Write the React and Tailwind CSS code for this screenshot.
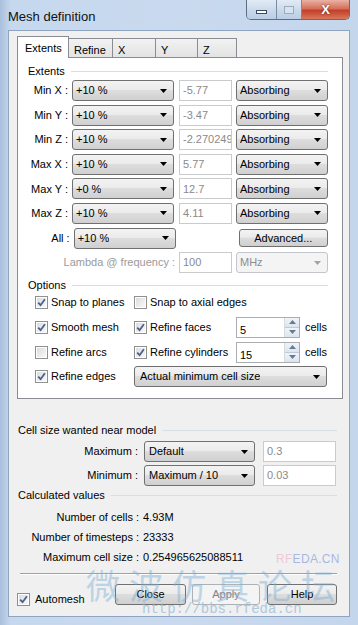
import React from 'react';

const Arrow = ({ disabled }) => (
  <svg width="7" height="4" viewBox="0 0 7 4" className="shrink-0">
    <path d="M0 0h7L3.5 4z" fill={disabled ? '#a3a3a3' : '#000'} />
  </svg>
);

const Combo = ({ text, className = '', disabled }) => (
  <div
    className={`h-[21px] shrink-0 flex items-center justify-between pl-[3px] pr-[6px] rounded-[3px] border ${
      disabled
        ? 'border-[#c3c6ca] bg-[#f4f4f4] text-[#8d8d8d]'
        : 'border-[#707070] bg-[linear-gradient(#f3f3f3,#ebebeb_45%,#dddddd_50%,#d0d0d0)]'
    } ${className}`}
  >
    <span className="whitespace-nowrap overflow-hidden">{text}</span>
    <Arrow disabled={disabled} />
  </div>
);

const Field = ({ text, className = '', dark }) => (
  <div
    className={`h-[21px] shrink-0 flex items-center pl-[3px] border bg-white overflow-hidden whitespace-nowrap ${
      dark ? 'border-[#abadb3] text-black' : 'border-[#c9cbcf] text-[#8a8a8a]'
    } ${className}`}
  >
    {text}
  </div>
);

const Check = ({ checked }) => (
  <div className="w-[13px] h-[13px] shrink-0 border border-[#8e8f8f] bg-white p-[1px]">
    <div className="w-full h-full bg-[linear-gradient(135deg,#dcdcdc,#f8f8f8)] flex items-center justify-center">
      {checked && (
        <svg width="9" height="9" viewBox="0 0 9 9">
          <path d="M1.2 4.6L3.6 7.2L7.9 1.2" fill="none" stroke="#4a5f8f" strokeWidth="1.8" />
        </svg>
      )}
    </div>
  </div>
);

const CheckLabel = ({ checked, label, className = '' }) => (
  <div className={`flex items-center gap-[3px] whitespace-nowrap ${className}`}>
    <Check checked={checked} />
    <span>{label}</span>
  </div>
);

const Group = ({ title, className = '' }) => (
  <div className={`h-[14px] flex items-center gap-[6px] ${className}`}>
    <span className="whitespace-nowrap">{title}</span>
    <div className="flex-1 h-px bg-[#d5dfe5]" />
  </div>
);

const Spin = ({ value }) => (
  <div className="h-[21px] w-[64px] shrink-0 flex border border-[#abadb3] bg-white">
    <span className="flex-1 pl-[3px] pt-[4px]">{value}</span>
    <div className="w-[15px] flex flex-col border-l border-[#d6dbe0]">
      <div className="flex-1 flex items-center justify-center bg-[linear-gradient(#f0f4f9,#dbe5f0)] border-b border-[#c0cad6]">
        <svg width="7" height="4" viewBox="0 0 7 4"><path d="M0 4h7L3.5 0z" fill="#6a7a90" /></svg>
      </div>
      <div className="flex-1 flex items-center justify-center bg-[linear-gradient(#f0f4f9,#dbe5f0)]">
        <svg width="7" height="4" viewBox="0 0 7 4"><path d="M0 0h7L3.5 4z" fill="#6a7a90" /></svg>
      </div>
    </div>
  </div>
);

const Button = ({ text, className = '', disabled }) => (
  <div
    className={`h-[21px] flex items-center justify-center rounded-[3px] border ${
      disabled
        ? 'border-[#adb2b5] bg-[#f4f4f4] text-[#838383]'
        : 'border-[#707070] bg-[linear-gradient(#f3f3f3,#ebebeb_45%,#dddddd_50%,#cfcfcf)]'
    } ${className}`}
  >
    {text}
  </div>
);

const extents = [
  ['Min X :', '+10 %', '-5.77'],
  ['Min Y :', '+10 %', '-3.47'],
  ['Min Z :', '+10 %', '-2.270249'],
  ['Max X :', '+10 %', '5.77'],
  ['Max Y :', '+0 %', '12.7'],
  ['Max Z :', '+10 %', '4.11'],
];

const tabs = [
  ['Refine', 'w-[44px]'],
  ['X', 'w-[43px]'],
  ['Y', 'w-[42px]'],
  ['Z', 'w-[39px]'],
];

export default function App() {
  return (
    <div className="w-[358px] h-[625px] relative overflow-hidden bg-[linear-gradient(90deg,#a9bfdc,#c6d8ee_3%,#c9daef_50%,#c4d6ec)] font-['Liberation_Sans',Arial,sans-serif] text-[11px] text-black">
      {/* title bar */}
      <div className="h-[30px] flex justify-between items-start">
        <div className="pl-[8px] pt-[7px] text-[13px] text-[#111]">Mesh definition</div>
        <div className="mr-[8px] flex h-[20px] rounded-b-[5px] overflow-hidden border border-t-0 border-[#5d6d85]">
          <div className="w-[30px] flex items-center justify-center bg-[linear-gradient(#e2ebf6,#cbdaec_50%,#b9cde5)] border-r border-[#7a8aa0]">
            <div className="w-[11px] h-[4px] mt-[4px] bg-white border border-[#3b4a60]" />
          </div>
          <div className="w-[25px] flex items-center justify-center bg-[linear-gradient(#e2ebf6,#cbdaec_50%,#b9cde5)] border-r border-[#7a8aa0]">
            <div className="w-[10px] h-[8px] border border-[#9eabbd] bg-[#d8e3f0]" />
          </div>
          <div className="w-[47px] flex items-center justify-center bg-[linear-gradient(#eab2a4,#d6705a_45%,#c2402a_55%,#d9785a)]">
            <span className="text-white font-bold text-[13px] leading-none [text-shadow:0_0_2px_#4a1a10]">X</span>
          </div>
        </div>
      </div>

      {/* client area */}
      <div className="ml-[8px] w-[342px] h-[587px] border border-[#8ea4c0] bg-[#f0f0f0] flex flex-col">
        <div className="pl-[8px] pt-[5px]">
          {/* tabs */}
          <div className="flex items-end h-[21px]">
            <div className="w-[52px] h-[22px] -mb-px relative z-10 bg-white border border-b-0 border-[#898c95] pl-[7px] pt-[3px]">
              Extents
            </div>
            {tabs.map(([t, w]) => (
              <div
                key={t}
                className={`${w} h-[19px] border border-l-0 border-b-0 border-[#898c95] bg-[linear-gradient(#f2f2f2,#e3e3e3)] pl-[5px] pt-[3px]`}
              >
                {t}
              </div>
            ))}
          </div>

          {/* tab page */}
          <div className="w-[326px] h-[342px] border border-[#898c95] bg-white flex flex-col pl-[10px] pr-[14px]">
            <Group title="Extents" className="mt-[6px]" />
            <div className="mt-[2px] flex flex-col gap-[3.6px]">
              {extents.map(([label, pct, val]) => (
                <div key={label} className="flex h-[21px] items-center">
                  <span className="w-[43px] text-right pr-[1px] whitespace-nowrap">{label}</span>
                  <Combo text={pct} className="ml-[3px] w-[102px]" />
                  <Field text={val} className="ml-[5px] w-[53px]" />
                  <Combo text="Absorbing" className="ml-[4px] w-[92px]" />
                </div>
              ))}
              <div className="flex h-[21px] items-center">
                <span className="w-[43px] text-right pr-[1px]">All :</span>
                <Combo text="+10 %" className="ml-[3px] w-[102px]" />
                <Button text="Advanced..." className="ml-[63px] w-[90px] !h-[18px]" />
              </div>
              <div className="flex h-[21px] items-center">
                <span className="w-[147px] text-right text-[#9a9a9a] whitespace-nowrap">Lambda @ frequency :</span>
                <Field text="100" className="ml-[4px] w-[53px]" />
                <Combo text="MHz" disabled className="ml-[4px] w-[92px]" />
              </div>
            </div>

            <Group title="Options" className="mt-[5px]" />
            <div className="flex flex-col gap-[3.7px] pl-[7px]">
              <div className="flex h-[21px] items-center">
                <CheckLabel checked label="Snap to planes" className="w-[99px]" />
                <CheckLabel label="Snap to axial edges" />
              </div>
              <div className="flex h-[21px] items-center">
                <CheckLabel checked label="Smooth mesh" className="w-[99px]" />
                <CheckLabel checked label="Refine faces" className="w-[102px]" />
                <Spin value="5" />
                <span className="ml-[5px]">cells</span>
              </div>
              <div className="flex h-[21px] items-center">
                <CheckLabel label="Refine arcs" className="w-[99px]" />
                <CheckLabel checked label="Refine cylinders" className="w-[102px]" />
                <Spin value="15" />
                <span className="ml-[5px]">cells</span>
              </div>
              <div className="flex h-[21px] items-center">
                <CheckLabel checked label="Refine edges" className="w-[99px]" />
                <Combo text="Actual minimum cell size" className="w-[193px] pl-[5px]" />
              </div>
            </div>
          </div>
        </div>

        {/* cell size */}
        <div className="pl-[9px] pr-[12px] flex flex-col">
          <Group title="Cell size wanted near model" className="mt-[24px]" />
          <div className="mt-[4px] flex flex-col gap-[3px]">
            <div className="flex h-[21px] items-center">
              <span className="w-[120px] text-right">Maximum :</span>
              <Combo text="Default" className="ml-[6px] w-[111px] pl-[4px]" />
              <Field text="0.3" className="ml-[8px] w-[73px]" />
            </div>
            <div className="flex h-[21px] items-center">
              <span className="w-[120px] text-right">Minimum :</span>
              <Combo text="Maximum / 10" className="ml-[6px] w-[111px] pl-[4px]" />
              <Field text="0.03" className="ml-[8px] w-[73px]" />
            </div>
          </div>

          <Group title="Calculated values" className="mt-[2px]" />
          <div className="mt-[5px] flex flex-col">
            {[
              ['Number of cells :', '4.93M'],
              ['Number of timesteps :', '23333'],
              ['Maximum cell size :', '0.254965625088511'],
            ].map(([l, v]) => (
              <div key={l} className="h-[20px] flex items-center">
                <span className="w-[121px] text-right whitespace-nowrap">{l}</span>
                <span className="ml-[4px]">{v}</span>
              </div>
            ))}
          </div>

          <div className="mt-[6px] ml-[2px] h-px bg-[#a0a0a0] border-b border-white box-content" />

          <div className="mt-[9px] flex items-start">
            <CheckLabel checked label="Automesh" className="mt-[7px] pl-[-1px] w-[101px] gap-[5px] -ml-[1px]" />
            <Button text="Close" className="w-[73px]" />
            <Button text="Apply" disabled className="ml-[6px] w-[70px]" />
            <Button text="Help" className="ml-[7px] w-[72px]" />
          </div>
        </div>
      </div>

      {/* watermark */}
      <div className="absolute left-[276px] top-[550px] text-[12px] tracking-[0.3px] pointer-events-none">
        <span className="text-[#efc9d9]">RF</span>
        <span className="text-[#a9b7e3]">EDA.CN</span>
      </div>
      <div className="absolute left-[86px] top-[568px] text-[34px] leading-none tracking-[9px] text-[#7fb0d6] opacity-45 font-['Noto_Sans_CJK_SC',sans-serif] pointer-events-none">
        微波仿真论坛
      </div>
      <div className="absolute left-[142px] top-[602px] text-[14px] leading-none font-['Liberation_Mono',monospace] text-[#9dc0dc] opacity-80 pointer-events-none">
        http://bbs.rfeda.cn
      </div>
    </div>
  );
}
